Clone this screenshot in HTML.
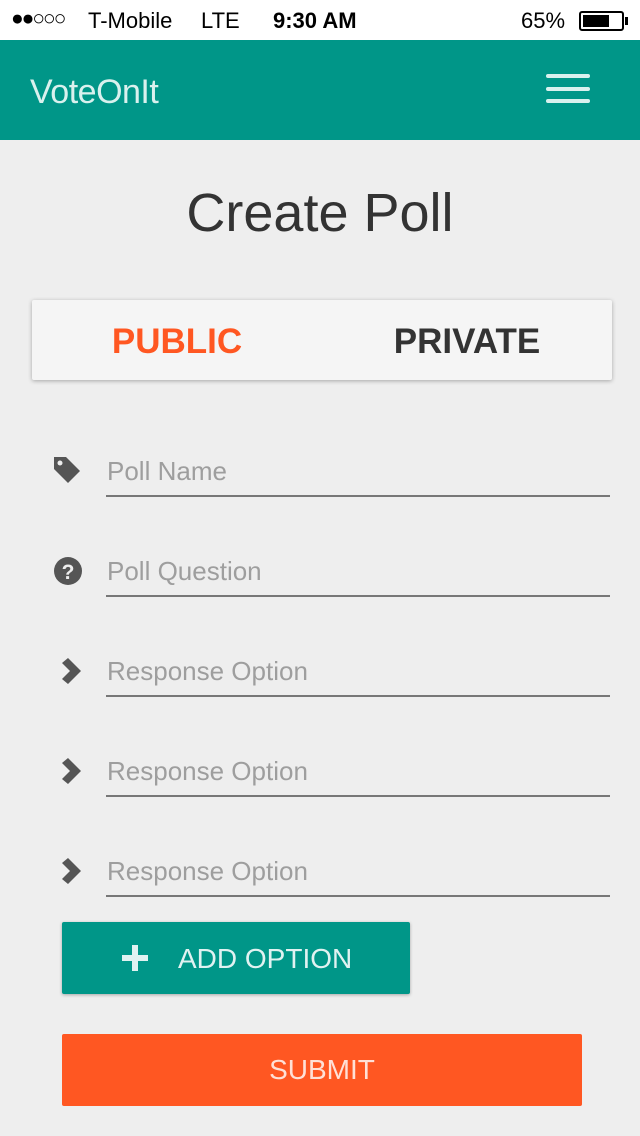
<!DOCTYPE html>
<html><head><meta charset="utf-8"><style>
*{margin:0;padding:0;box-sizing:border-box}
body{width:640px;height:1136px;background:#eeeeee;font-family:"Liberation Sans",sans-serif;position:relative;overflow:hidden}
.abs{position:absolute}
.status{top:0;left:0;width:640px;height:40px;background:#fff;font-size:22px;color:#000}
.hdr{top:40px;left:0;width:640px;height:100px;background:#009688}
.field{position:absolute;left:106px;width:504px;height:2px;background:#777}
.ph{position:absolute;left:107px;font-size:26px;color:#9e9e9e;line-height:30px}
.ic{position:absolute;left:52px}
</style></head><body>
<div class="abs status">
 <div class="abs" style="left:11px;top:7px;font-size:21px;letter-spacing:-2px">●●○○○</div>
 <div class="abs" style="left:88px;top:8px">T-Mobile</div>
 <div class="abs" style="left:201px;top:8px">LTE</div>
 <div class="abs" style="left:273px;top:8px;font-weight:bold">9:30 AM</div>
 <div class="abs" style="left:521px;top:8px">65%</div>
 <div class="abs" style="left:579px;top:11px;width:45px;height:20px;border:2px solid #000;border-radius:3px"><div style="margin:2px;width:26px;height:12px;background:#000"></div></div>
 <div class="abs" style="left:625px;top:17px;width:3px;height:8px;background:#000"></div>
</div>
<div class="abs hdr">
 <div class="abs" style="left:30px;top:33px;font-size:34px;color:#d9f1ee;letter-spacing:-0.5px">VoteOnIt</div>
 <div class="abs" style="left:546px;top:34px;width:44px;height:4px;background:#d9f1ee;border-radius:2px"></div>
 <div class="abs" style="left:546px;top:47px;width:44px;height:4px;background:#d9f1ee;border-radius:2px"></div>
 <div class="abs" style="left:546px;top:59px;width:44px;height:4px;background:#d9f1ee;border-radius:2px"></div>
</div>
<div class="abs" style="top:182px;left:0;width:640px;text-align:center;font-size:54px;color:#333">Create Poll</div>
<div class="abs" style="left:32px;top:300px;width:580px;height:80px;background:#f5f5f5;box-shadow:0 1px 4px rgba(0,0,0,.3);border-radius:2px">
 <div class="abs" style="left:0;width:290px;top:22px;text-align:center;font-size:35px;font-weight:bold;color:#ff5722">PUBLIC</div>
 <div class="abs" style="left:290px;width:290px;top:22px;text-align:center;font-size:35px;font-weight:bold;color:#333">PRIVATE</div>
</div>

<svg class="ic" style="top:455px" width="32" height="32" viewBox="0 0 32 32"><path d="M2 2h12l14 14-12 12L2 14z" fill="#555"/><circle cx="8" cy="8" r="2.5" fill="#eee"/></svg>
<div class="ph" style="top:456px">Poll Name</div><div class="field" style="top:495px"></div>

<svg class="ic" style="top:556px;left:53px" width="30" height="30" viewBox="0 0 30 30"><circle cx="15" cy="15" r="14" fill="#555"/><text x="15" y="23" text-anchor="middle" font-family="Liberation Sans" font-weight="bold" font-size="21" fill="#eee">?</text></svg>
<div class="ph" style="top:556px">Poll Question</div><div class="field" style="top:595px"></div>

<svg class="ic" style="top:658px;left:60px" width="22" height="26" viewBox="0 0 22 26"><path d="M2 5l6-5 13 13-13 13-6-5 8-8z" fill="#555"/></svg>
<div class="ph" style="top:656px">Response Option</div><div class="field" style="top:695px"></div>
<svg class="ic" style="top:758px;left:60px" width="22" height="26" viewBox="0 0 22 26"><path d="M2 5l6-5 13 13-13 13-6-5 8-8z" fill="#555"/></svg>
<div class="ph" style="top:756px">Response Option</div><div class="field" style="top:795px"></div>
<svg class="ic" style="top:858px;left:60px" width="22" height="26" viewBox="0 0 22 26"><path d="M2 5l6-5 13 13-13 13-6-5 8-8z" fill="#555"/></svg>
<div class="ph" style="top:856px">Response Option</div><div class="field" style="top:895px"></div>

<div class="abs" style="left:62px;top:922px;width:348px;height:72px;background:#009688;box-shadow:0 1px 3px rgba(0,0,0,.3);border-radius:2px">
 <div class="abs" style="left:60px;width:26px;height:6px;background:#e0f2f1;top:33px"></div>
 <div class="abs" style="left:70px;top:23px;width:6px;height:26px;background:#e0f2f1"></div>
 <div class="abs" style="left:116px;top:21px;font-size:28px;color:#e0f2f1">ADD OPTION</div>
</div>
<div class="abs" style="left:62px;top:1034px;width:520px;height:72px;background:#ff5722;border-radius:2px;text-align:center;font-size:28px;color:#ffe0d6;line-height:72px">SUBMIT</div>
</body></html>
